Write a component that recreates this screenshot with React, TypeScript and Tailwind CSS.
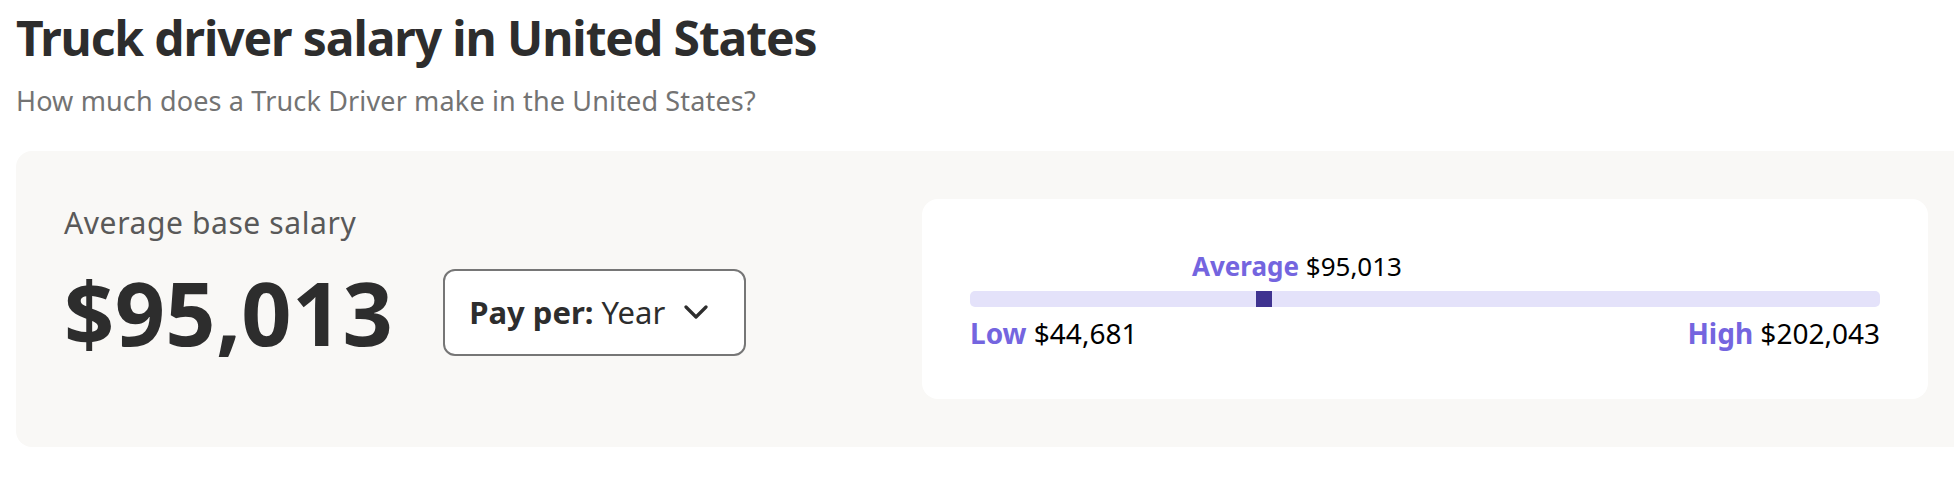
import React from "react";

export default function App() {
  return (
    <div
      className="w-[1954px] h-[480px] overflow-hidden bg-white pl-4 pt-2"
      style={{ fontFamily: "'Noto Sans', 'Open Sans', sans-serif" }}
    >
      <h1 className="text-[48px] leading-[60px] font-bold text-[#2d2d2d] tracking-[-1.1px] whitespace-nowrap">
        Truck driver salary in United States
      </h1>
      <p className="mt-[15px] text-[27px] leading-[36px] text-[#737373] tracking-[0.15px] whitespace-nowrap">
        How much does a Truck Driver make in the United States?
      </p>

      <div className="mt-8 w-[1960px] rounded-2xl bg-[#f9f8f6] p-12 flex">
        <div className="flex-1 pt-[6px]">
          <div className="text-[30px] leading-[36px] text-[#595959] tracking-[0.6px] whitespace-nowrap">
            Average base salary
          </div>
          <div className="mt-[27px] flex items-center">
            <div className="text-[88px] leading-[88px] font-bold text-[#2d2d2d] tracking-[0.3px]">
              $95,013
            </div>
            <button className="ml-[50px] w-[303px] h-[87px] border-2 border-[#767676] rounded-xl bg-white flex items-center justify-between pl-6 pr-9 text-[31px] text-[#2d2d2d] whitespace-nowrap">
              <span>
                <span className="font-bold">Pay per:</span> Year
              </span>
              <svg width="24" height="15" viewBox="0 0 24 15" fill="none">
                <path
                  d="M2 2 L12 12 L22 2"
                  stroke="#2d2d2d"
                  strokeWidth="3.2"
                  strokeLinecap="round"
                  strokeLinejoin="round"
                />
              </svg>
            </button>
          </div>
        </div>

        <div className="w-[1006px] h-[200px] rounded-2xl bg-white px-12 py-12">
          <div className="mt-px text-[26px] leading-[36px] text-black pl-[222px] whitespace-nowrap">
            <span className="font-bold text-[#7465df]">Average</span> $95,013
          </div>
          <div className="relative mt-[7px] h-4 rounded-[5px] bg-[#e4e2fa]">
            <div className="absolute left-[286px] top-0 w-4 h-4 bg-[#3f3390]" />
          </div>
          <div className="mt-2 flex justify-between text-[28px] leading-[36px] text-black whitespace-nowrap">
            <div>
              <span className="font-bold text-[#7465df]">Low</span> $44,681
            </div>
            <div>
              <span className="font-bold text-[#7465df]">High</span> $202,043
            </div>
          </div>
        </div>
      </div>
    </div>
  );
}
